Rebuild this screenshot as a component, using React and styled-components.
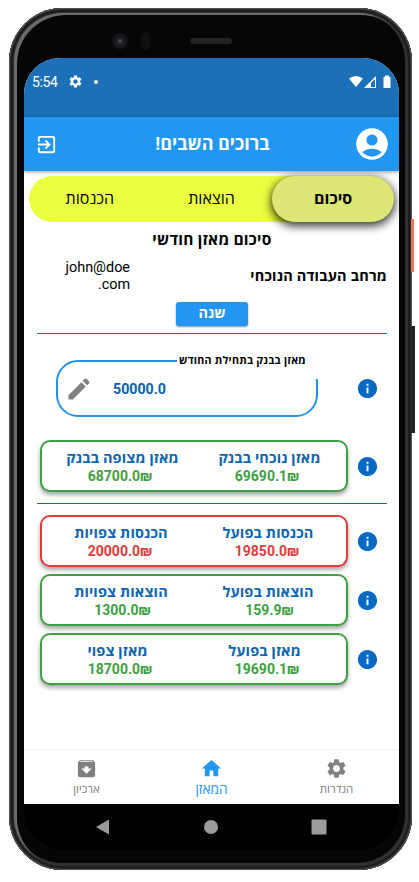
import React from "react";
import styled, { createGlobalStyle } from "styled-components";
import {
  MdSettings, MdExitToApp, MdAccountCircle, MdEdit, MdInfo, MdHome, MdArchive,
} from "react-icons/md";

const GlobalStyle = createGlobalStyle`
  * { box-sizing: border-box; }
  body { margin: 0; background: #fff; font-family: Roboto, "Open Sans", sans-serif; }
`;

const Stage = styled.main`
  width: 419px;
  height: 882px;
  padding: 8px 0 0 9px;
  overflow: hidden;
`;

const Phone = styled.div`
  position: relative;
  width: 403px;
  height: 862px;
  padding: 0 13px 0 15px;
  border-radius: 54px;
  background: #060608;
  box-shadow: inset 0 0 0 1px #555, inset 0 0 0 2px #29292b, inset 0 0 0 4px #1d1d1f,
    inset 0 0 0 5px #343436, inset 3px 2px 0 5px #6b6b6d, inset -1px -1px 0 6px #303033;
`;

const SideButton = styled.div`
  position: absolute;
  left: 402px;
  top: ${(p) => p.$top}px;
  width: ${(p) => p.$width}px;
  height: ${(p) => p.$height}px;
  background: ${(p) => p.$color};
`;

const Bezel = styled.div`
  height: 50px;
  display: flex;
  align-items: center;
  padding: 15px 0 0 87px;
`;

const Camera = styled.div`
  width: 18px;
  height: 18px;
  border-radius: 50%;
  background: radial-gradient(circle, #46464b 0 1px, #1d1d22 3px, #17171b 6px, #0c0c0f 8px);
`;

const Sensor = styled.div`
  width: 9px;
  height: 18px;
  margin-left: 12px;
  border-radius: 5px;
  background: #101013;
`;

const Speaker = styled.div`
  width: 42px;
  height: 6px;
  margin-left: 40px;
  border-radius: 3px;
  background: #232325;
`;

const Screen = styled.div`
  width: 375px;
  height: 746px;
  display: flex;
  flex-direction: column;
  overflow: hidden;
  border-radius: 36px 36px 0 0;
  background: #fff;
`;

const StatusBar = styled.div`
  height: 59px;
  display: flex;
  align-items: center;
  padding: 0 8px 12px;
  background: #1b70b7;
  color: #fff;
  font-size: 14px;
`;

const StatusTime = styled.span`
  width: 35.5px;
  letter-spacing: -0.4px;
`;

const StatusDot = styled.span`
  width: 4px;
  height: 4px;
  margin-left: 11px;
  border-radius: 50%;
  background: #fff;
`;

const StatusSignals = styled.svg`
  width: 42px;
  height: 14px;
  margin-left: auto;
`;

const AppBar = styled.header`
  position: relative;
  height: 54px;
  flex: none;
  display: flex;
  align-items: center;
  justify-content: space-between;
  padding: 0 8px 0 11px;
  background: #2196f3;
  color: #fff;
  box-shadow: 0 1px 4px rgba(0, 0, 0, 0.4);
`;

const AppTitle = styled.h1`
  margin: 0 0 0 14px;
  font-size: 18px;
  font-weight: 700;
  line-height: 24px;
`;

const Tabs = styled.nav`
  height: 46px;
  flex: none;
  display: flex;
  margin: 5px 5px 0 5px;
  border-radius: 23px;
  background: #eaff41;
`;

const Tab = styled.button`
  flex: 1;
  padding: 0 0 1px;
  border: 0;
  border-radius: 23px;
  color: #000;
  font: ${(p) => (p.$active ? 700 : 400)} 16px/24px Roboto, "Open Sans", sans-serif;
  background: ${(p) => (p.$active ? "#dde775" : "transparent")};
  box-shadow: ${(p) => (p.$active ? "0 3px 10px 1px rgba(0,0,0,.8)" : "none")};
`;

const Content = styled.section`
  flex: 1;
  display: flex;
  flex-direction: column;
  padding: 7px 12px 0 13px;
`;

const Heading = styled.h2`
  margin: 0 0 5px;
  text-align: center;
  font-size: 15.5px;
  font-weight: 700;
  letter-spacing: 0.25px;
  line-height: 23px;
`;

const WorkspaceRow = styled.div`
  height: 40px;
  display: flex;
  align-items: center;
  justify-content: space-between;
  padding-left: 28px;
`;

const WorkspaceName = styled.div`
  width: 65px;
  padding-bottom: 2px;
  text-align: right;
  font-size: 14.4px;
  line-height: 17.5px;
`;

const WorkspaceLabel = styled.div`
  padding-bottom: 3px;
  font-size: 14.5px;
  font-weight: 700;
  letter-spacing: 0.2px;
`;

const YearButton = styled.button`
  width: 72px;
  height: 24px;
  margin: 5px auto 0;
  padding: 0;
  border: 0;
  border-radius: 3px;
  background: #2196f3;
  color: #fff;
  font: 700 14.5px/24px Roboto, "Open Sans", sans-serif;
  box-shadow: 0 1px 2px rgba(0, 0, 0, 0.45);
`;

const Divider = styled.hr`
  width: 100%;
  height: 1px;
  flex: none;
  margin: ${(p) => p.$top}px 0 ${(p) => p.$bottom}px;
  border: 0;
  background: #176c9e;
`;

const Row = styled.div`
  display: flex;
  align-items: center;
  justify-content: space-between;
  padding: 0 8px 0 ${(p) => p.$indent || 3}px;
  margin-bottom: ${(p) => p.$gap || 0}px;
  color: #0869c5;
`;

const BankField = styled.div`
  position: relative;
  width: 262px;
  height: 57px;
  display: flex;
  align-items: center;
  gap: 20px;
  padding-left: 7px;
  border: 2px solid #2592e6;
  border-radius: 22px;
  color: #0961b3;
  font-size: 14.2px;
  font-weight: 700;
`;

const FieldLegend = styled.div`
  position: absolute;
  top: -12px;
  right: -3px;
  width: 142px;
  height: 29px;
  padding: 1px 13px 0 0;
  background: #fff;
  color: #000;
  font-size: 10.7px;
  font-weight: 700;
  letter-spacing: 0.25px;
  line-height: 20px;
  text-align: right;
  white-space: nowrap;
`;

const Card = styled.article`
  width: 308px;
  height: 52px;
  display: grid;
  grid-template-columns: 1fr 1fr;
  align-items: center;
  padding: 1px 3px 0 7px;
  border: 2px solid ${(p) => p.$color};
  border-radius: 10px;
  background: #fff;
  color: ${(p) => p.$color};
  text-align: center;
  box-shadow: 0 3px 4px rgba(0, 0, 0, 0.34);
`;

const CardLabel = styled.div`
  padding-right: ${(p) => p.$inset}px;
  color: #0c65b3;
  font-size: 14.5px;
  font-weight: 700;
  letter-spacing: 0.15px;
  line-height: 18px;
  white-space: nowrap;
`;

const CardValue = styled.div`
  padding-right: ${(p) => p.$inset}px;
  font-size: 14px;
  font-weight: 700;
  line-height: 16px;
`;

const BottomBar = styled.nav`
  height: 55px;
  flex: none;
  display: grid;
  grid-template-columns: repeat(3, 1fr);
  border-top: 1px solid #f4f4f4;
`;

const BottomItem = styled.a`
  display: flex;
  flex-direction: column;
  align-items: center;
  padding-top: 7px;
  color: ${(p) => (p.$active ? "#2196f3" : "#808080")};
  font-size: ${(p) => (p.$active ? 13.7 : 11.5)}px;
  line-height: 19px;
`;

const SystemNav = styled.div`
  height: 46px;
  display: flex;
  align-items: center;
  justify-content: space-between;
  padding: 0 72px 0 71px;
  border-radius: 0 0 40px 40px;
  background: #000;
`;

const SystemIcon = styled.svg`
  width: 16px;
  height: 16px;
  fill: #9b9b9b;
`;

const GREEN = "#3f9f43";
const RED = "#e03c3b";

function SummaryRow({ color = GREEN, left, right, gap, labelInset = 0, valueInset = 5 }) {
  return (
    <Row $gap={gap}>
      <Card $color={color}>
        {[left, right].map(([label, value]) => (
          <div key={label}>
            <CardLabel dir="rtl" $inset={labelInset}>{label}</CardLabel>
            <CardValue $inset={valueInset}>{value}₪</CardValue>
          </div>
        ))}
      </Card>
      <MdInfo size={23} />
    </Row>
  );
}

export default function App() {
  return (
    <Stage>
      <GlobalStyle />
      <Phone>
        <SideButton $top={211} $height={53} $width={3} $color="#ed7862" />
        <SideButton $top={318} $height={107} $width={4} $color="#252527" />
        <Bezel><Camera /><Sensor /><Speaker /></Bezel>
        <Screen>
          <StatusBar>
            <StatusTime>5:54</StatusTime>
            <MdSettings size={15} />
            <StatusDot />
            <StatusSignals viewBox="0 0 42 14">
              <path d="M0 3.5Q7 -1.5 14 3.5L7 12Z" fill="#fff" />
              <path d="M15 13L27 1V13Z" fill="#fff" />
              <path d="M22 8L26 4V12H22Z" fill="#1b70b7" />
              <path d="M35 2H36V0.5H40V2H41.5V13H34.5V2Z" fill="#fff" />
            </StatusSignals>
          </StatusBar>
          <AppBar>
            <MdExitToApp size={23} />
            <AppTitle dir="rtl">ברוכים השבים!</AppTitle>
            <MdAccountCircle size={38} />
          </AppBar>
          <Tabs>
            <Tab>הכנסות</Tab>
            <Tab>הוצאות</Tab>
            <Tab $active>סיכום</Tab>
          </Tabs>
          <Content>
            <Heading dir="rtl">סיכום מאזן חודשי</Heading>
            <WorkspaceRow>
              <WorkspaceName>john@doe<br />.com</WorkspaceName>
              <WorkspaceLabel dir="rtl">מרחב העבודה הנוכחי</WorkspaceLabel>
            </WorkspaceRow>
            <YearButton>שנה</YearButton>
            <Divider $top={7} $bottom={26} />
            <Row $indent={19} $gap={23}>
              <BankField>
                <FieldLegend dir="rtl">מאזן בבנק בתחילת החודש</FieldLegend>
                <MdEdit size={28} color="#808080" />
                <span>50000.0</span>
              </BankField>
              <MdInfo size={23} />
            </Row>
            <SummaryRow
              left={["מאזן מצופה בבנק", "68700.0"]}
              right={["מאזן נוכחי בבנק", "69690.1"]}
            />
            <Divider $top={11} $bottom={11} />
            <SummaryRow
              gap={7}
              color={RED}
              labelInset={3}
              left={["הכנסות צפויות", "20000.0"]}
              right={["הכנסות בפועל", "19850.0"]}
            />
            <SummaryRow
              gap={7}
              labelInset={3}
              valueInset={0}
              left={["הוצאות צפויות", "1300.0"]}
              right={["הוצאות בפועל", "159.9"]}
            />
            <SummaryRow
              labelInset={10}
              left={["מאזן צפוי", "18700.0"]}
              right={["מאזן בפועל", "19690.1"]}
            />
          </Content>
          <BottomBar>
            <BottomItem><MdArchive size={23} />ארכיון</BottomItem>
            <BottomItem $active><MdHome size={23} />המאזן</BottomItem>
            <BottomItem><MdSettings size={23} />הגדרות</BottomItem>
          </BottomBar>
        </Screen>
        <SystemNav>
          <SystemIcon viewBox="0 0 16 16"><path d="M1 8L14 0.5V15.5Z" /></SystemIcon>
          <SystemIcon viewBox="0 0 16 16"><circle cx="8" cy="8" r="7" /></SystemIcon>
          <SystemIcon viewBox="0 0 16 16"><rect x="0.5" y="0.5" width="15" height="15" rx="1" /></SystemIcon>
        </SystemNav>
      </Phone>
    </Stage>
  );
}
